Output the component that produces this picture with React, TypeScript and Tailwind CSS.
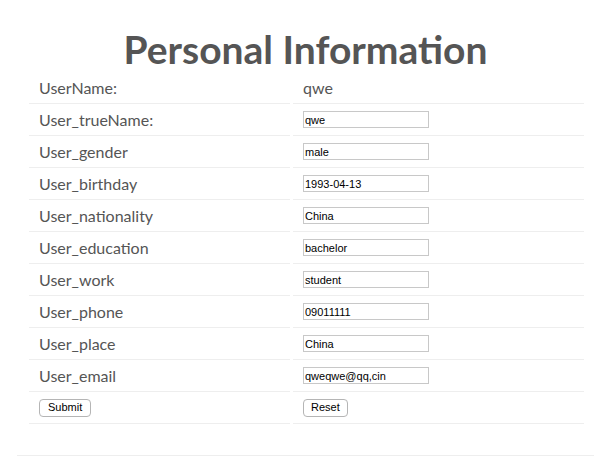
const rows: [string, string][] = [
  ['User_trueName:', 'qwe'],
  ['User_gender', 'male'],
  ['User_birthday', '1993-04-13'],
  ['User_nationality', 'China'],
  ['User_education', 'bachelor'],
  ['User_work', 'student'],
  ['User_phone', '09011111'],
  ['User_place', 'China'],
  ['User_email', 'qweqwe@qq,cin'],
];

export default function App() {
  return (
    <div className="min-h-screen bg-white text-[#555] font-['Lato',sans-serif]">
      <div className="px-[17px] pt-[26px]">
        <h1 className="text-center text-[39px] font-bold leading-[46px] text-[#555]">Personal Information</h1>
        <div className="ml-[12px] grid w-[555px] grid-cols-[261px_291px] gap-x-[3px]">
          <div className="flex h-[32px] items-center border-b border-[#eee] pl-[10px] text-[16px]">UserName:</div>
          <div className="flex h-[32px] items-center border-b border-[#eee] pl-[10px] text-[16px]">qwe</div>
          {rows.map(([label, value]) => (
            <div key={label} className="contents">
              <div className="flex h-[32px] items-center border-b border-[#eee] pl-[10px] text-[16px]">{label}</div>
              <div className="flex h-[32px] items-center border-b border-[#eee] pl-[10px]">
                <input
                  defaultValue={value}
                  className="h-[17px] w-[126px] border border-[#c8c8c8] bg-white px-[1px] font-['Liberation_Sans',Arial,sans-serif] text-[11px] text-black outline-none"
                />
              </div>
            </div>
          ))}
          <div className="flex h-[32px] items-center border-b border-[#eee] pl-[10px]">
            <button className="h-[18px] rounded-[4px] border border-[#b5b5b5] bg-white px-[8px] font-['Liberation_Sans',Arial,sans-serif] text-[11px] leading-none text-black">Submit</button>
          </div>
          <div className="flex h-[32px] items-center border-b border-[#eee] pl-[10px]">
            <button className="h-[18px] rounded-[4px] border border-[#b5b5b5] bg-white px-[7px] font-['Liberation_Sans',Arial,sans-serif] text-[11px] leading-none text-black">Reset</button>
          </div>
        </div>
        <hr className="mt-[31px] border-t border-[#eee]" />
      </div>
    </div>
  );
}
